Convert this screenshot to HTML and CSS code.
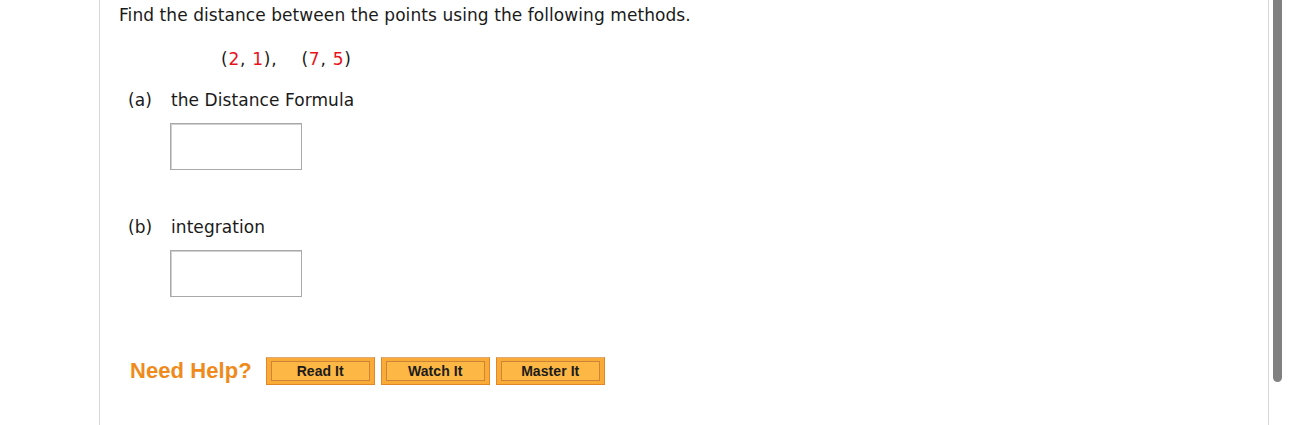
FILE: index.html
```html
<!DOCTYPE html>
<html>
<head>
<meta charset="utf-8">
<link rel="stylesheet" href="styles.css">
</head>
<body>
<div class="page">
  <div class="panel">
    <p class="prompt">Find the distance between the points using the following methods.</p>
    <div class="points">(<span class="red">2</span>, <span class="red">1</span>),<span class="gap"></span>(<span class="red">7</span>, <span class="red">5</span>)</div>
    <div class="part">
      <span class="label">(a)</span><span class="ptext">the Distance Formula</span>
    </div>
    <div class="answer"></div>
    <div class="part part-b">
      <span class="label">(b)</span><span class="ptext">integration</span>
    </div>
    <div class="answer"></div>
    <div class="help">
      <span class="need">Need Help?</span>
      <span class="btn"><span class="btn-in">Read It</span></span>
      <span class="btn"><span class="btn-in">Watch It</span></span>
      <span class="btn"><span class="btn-in">Master It</span></span>
    </div>
  </div>
  <div class="scroll"><div class="thumb"></div></div>
</div>
</body>
</html>
```
FILE: styles.css
```css
html, body {
  margin: 0;
  padding: 0;
  background: #fff;
}
.page {
  display: flex;
  height: 425px;
  overflow: hidden;
}
.panel {
  margin-left: 99px;
  width: 1170px;
  border-left: 1px solid #d6d6d6;
  border-right: 1px solid #d6d6d6;
  padding-left: 19px;
  font-family: "DejaVu Sans", Verdana, sans-serif;
  font-size: 17px;
  letter-spacing: 0.07px;
  color: #1a1a1a;
  box-sizing: border-box;
}
.prompt {
  margin: 4px 0 0 0;
  line-height: 22px;
}
.points {
  margin: 22px 0 0 102px;
  line-height: 22px;
  letter-spacing: 0.75px;
}
.gap {
  display: inline-block;
  width: 24px;
}
.red { color: #e8121b; }
.part {
  margin: 19px 0 0 9px;
  display: flex;
  line-height: 22px;
}
.label { width: 43px; }
.answer {
  margin: 12px 0 0 51px;
  width: 132px;
  height: 47px;
  border: 1px solid #a9a9a9;
  box-sizing: border-box;
  box-shadow: inset 1px 1px 0 #d0d0d0;
}
.part-b { margin-top: 46px; }
.help {
  margin: 60px 0 0 11px;
  display: flex;
  align-items: center;
}
.need {
  font-family: "Liberation Sans", Arial, sans-serif;
  font-weight: bold;
  font-size: 22px;
  color: #ef8a1c;
  margin-right: 14px;
}
.btn {
  display: block;
  width: 109px;
  height: 28px;
  box-sizing: border-box;
  background: #f9aa37;
  border: 1px solid;
  border-color: #dcab78 #e2862a #e2862a #e2862a;
  padding: 3px 4px 3px 4px;
  margin-right: 6px;
}
.btn-in {
  display: block;
  height: 100%;
  box-sizing: border-box;
  background: #fcb744;
  border: 1px solid #cc8438;
  font-family: "Liberation Sans", Arial, sans-serif;
  font-weight: bold;
  font-size: 14px;
  line-height: 18px;
  text-align: center;
  color: #1b1b1b;
}
.scroll {
  width: 10px;
  margin-left: 4px;
}
.thumb {
  width: 9px;
  height: 382px;
  background: #808080;
  border-radius: 0 0 5px 5px;
}
```
